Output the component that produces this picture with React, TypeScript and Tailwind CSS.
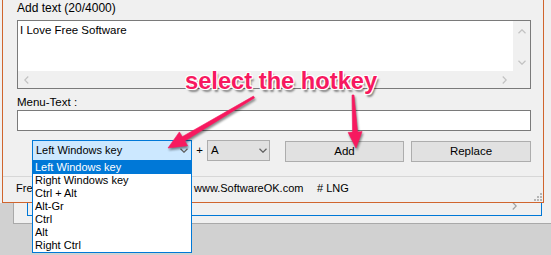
import React from "react";

const listItems = [
  "Left Windows key",
  "Right Windows key",
  "Ctrl + Alt",
  "Alt-Gr",
  "Ctrl",
  "Alt",
  "Right Ctrl",
];

function Chevron({ dir = "down", color = "#606060" }: { dir?: "down" | "up" | "left" | "right"; color?: string }) {
  const pts: Record<string, string> = {
    down: "0.5,0.5 4,4 7.5,0.5",
    up: "0.5,4 4,0.5 7.5,4",
    left: "4,0.5 0.5,4 4,7.5",
    right: "0.5,0.5 4,4 0.5,7.5",
  };
  const vertical = dir === "down" || dir === "up";
  return (
    <svg width={vertical ? 8 : 5} height={vertical ? 5 : 8} viewBox={vertical ? "0 0 8 4.5" : "0 0 4.5 8"}>
      <polyline points={pts[dir]} fill="none" stroke={color} strokeWidth="1.2" />
    </svg>
  );
}

function SizeGrip() {
  const dots = [
    [6, 0],
    [3, 3],
    [6, 3],
    [0, 6],
    [3, 6],
    [6, 6],
  ];
  return (
    <div className="relative w-[8px] h-[8px]">
      {dots.map(([x, y], i) => (
        <span
          key={i}
          className="absolute w-[2px] h-[2px] bg-[#b5b5b5]"
          style={{ left: x, top: y }}
        />
      ))}
    </div>
  );
}

function Dialog() {
  return (
    <div className="absolute left-[2px] top-[-1px] w-[542px] h-[204px] border border-[#d0652e] bg-[#f0f0f0] flex flex-col">
      <div className="flex flex-col pl-[14px] pr-[12px]">
        <div className="h-[20px] pt-[1px] text-[12px] leading-[14px]">Add text (20/4000)</div>

        <div className="h-[69px] border border-[#7a7a7a] bg-white flex flex-col">
          <div className="flex flex-1">
            <div className="flex-1 pl-[2px] pt-[2px] text-[11.5px] leading-[14px]">I Love Free Software</div>
            <div className="w-[17px] bg-[#f0f0f0] flex flex-col items-center justify-between pt-[8px] pb-[6px]">
              <Chevron dir="up" color="#c2c2c2" />
              <Chevron dir="down" color="#c2c2c2" />
            </div>
          </div>
          <div className="h-[17px] flex">
            <div className="flex-1 bg-[#f0f0f0] flex items-center justify-between px-[6px]">
              <Chevron dir="left" color="#c2c2c2" />
              <Chevron dir="right" color="#c2c2c2" />
            </div>
            <div className="w-[17px] bg-[#f0f0f0]" />
          </div>
        </div>

        <div className="h-[21px] pt-[6px] text-[11.5px] leading-[14px]">Menu-Text :</div>
        <div className="h-[21px] border border-[#7a7a7a] bg-white" />

        <div className="mt-[9px] h-[22px] flex items-start text-[11.5px]">
          <div className="ml-[15px] w-[160px] h-[21px] border border-[#0078d7] bg-[#cce8ff] flex items-center justify-between pl-[3px] pr-[3px] text-[11px]">
            <span>Left Windows key</span>
            <Chevron />
          </div>
          <div className="w-[15px] h-[21px] flex items-center justify-center">+</div>
          <div className="w-[63px] h-[21px] border border-[#adadad] bg-[#e1e1e1] flex items-center justify-between pl-[3px] pr-[2px]">
            <span>A</span>
            <Chevron />
          </div>
          <button className="ml-[15px] mt-[1px] w-[119px] h-[21px] border border-[#adadad] bg-[#e1e1e1] flex items-center justify-center">
            Add
          </button>
          <button className="ml-[7px] mt-[1px] w-[120px] h-[21px] border border-[#adadad] bg-[#e1e1e1] flex items-center justify-center">
            Replace
          </button>
        </div>
      </div>

      <div className="mt-[14px] h-[1px] bg-[#d7d7d7]" />

      <div className="flex-1 flex items-end justify-between">
        <div className="flex h-[25px] items-center text-[11px] pl-[13px] pb-[2px]">
          <span className="w-[16px] overflow-hidden whitespace-nowrap">Freeware</span>
          <span className="w-[162px]" />
          <span className="w-[123px]">www.SoftwareOK.com</span>
          <span># LNG</span>
        </div>
        <div className="pr-[1px] pb-[1px]">
          <SizeGrip />
        </div>
      </div>
    </div>
  );
}

function DropList() {
  return (
    <div className="absolute left-[32px] top-[160px] w-[160px] border border-[#0078d7] bg-white text-[11px] leading-[13px]">
      {listItems.map((item, i) => (
        <div
          key={item}
          className={
            i === 0
              ? "h-[13px] pl-[2px] bg-[#0078d7] text-white"
              : "h-[13px] pl-[2px] text-black"
          }
        >
          {item}
        </div>
      ))}
    </div>
  );
}

function Annotation() {
  return (
    <>
      <svg
        className="absolute left-0 top-0 pointer-events-none drop-shadow-[1px_2px_1px_rgba(0,0,0,0.45)]"
        width="551"
        height="255"
        viewBox="0 0 551 255"
      >
        <polygon
          points="253.5,96.1 182.2,136.7 179.4,131.9 168,148 187.6,145.7 184.8,141 254.5,97.9"
          fill="#f7195f"
          stroke="#f7195f"
          strokeWidth="0.6"
          strokeLinejoin="round"
        />
        <polygon
          points="352,95 352.6,132.1 348.1,132.4 356,148 362.1,131.6 357.6,131.9 354,95"
          fill="#f7195f"
          stroke="#f7195f"
          strokeWidth="0.6"
          strokeLinejoin="round"
        />
      </svg>
      <div className="absolute left-[185px] top-[70px] text-[23.7px] leading-[23px] font-bold text-[#f7195f] whitespace-nowrap [text-shadow:1px_0_0_#fff,-1px_0_0_#fff,0_1px_0_#fff,0_-1px_0_#fff,1px_1px_0_#fff,-1px_-1px_0_#fff,1px_-1px_0_#fff,-1px_1px_0_#fff,2px_3px_2px_rgba(0,0,0,0.45)]">
        select the hotkey
      </div>
    </>
  );
}

export default function App() {
  return (
    <div className="relative w-[551px] h-[255px] overflow-hidden bg-[#d1d1d1] text-black font-['Liberation_Sans',Arial,sans-serif]">
      <div className="absolute left-0 top-0 w-[13px] h-[203px] bg-[#f0f0f0]" />
      <div className="absolute left-[13px] top-0 w-[538px] h-[224px] bg-[#f0f0f0] border-l border-b border-[#a9a9a9]" />
      <div className="absolute left-[27px] top-0 w-[515px] h-[216px] bg-[#f0f0f0] border-l border-r border-b border-[#0078d7] flex items-end justify-end pr-[24px] pb-[5px]">
        <Chevron dir="right" color="#a0a0a0" />
      </div>
      <Dialog />
      <DropList />
      <Annotation />
    </div>
  );
}
